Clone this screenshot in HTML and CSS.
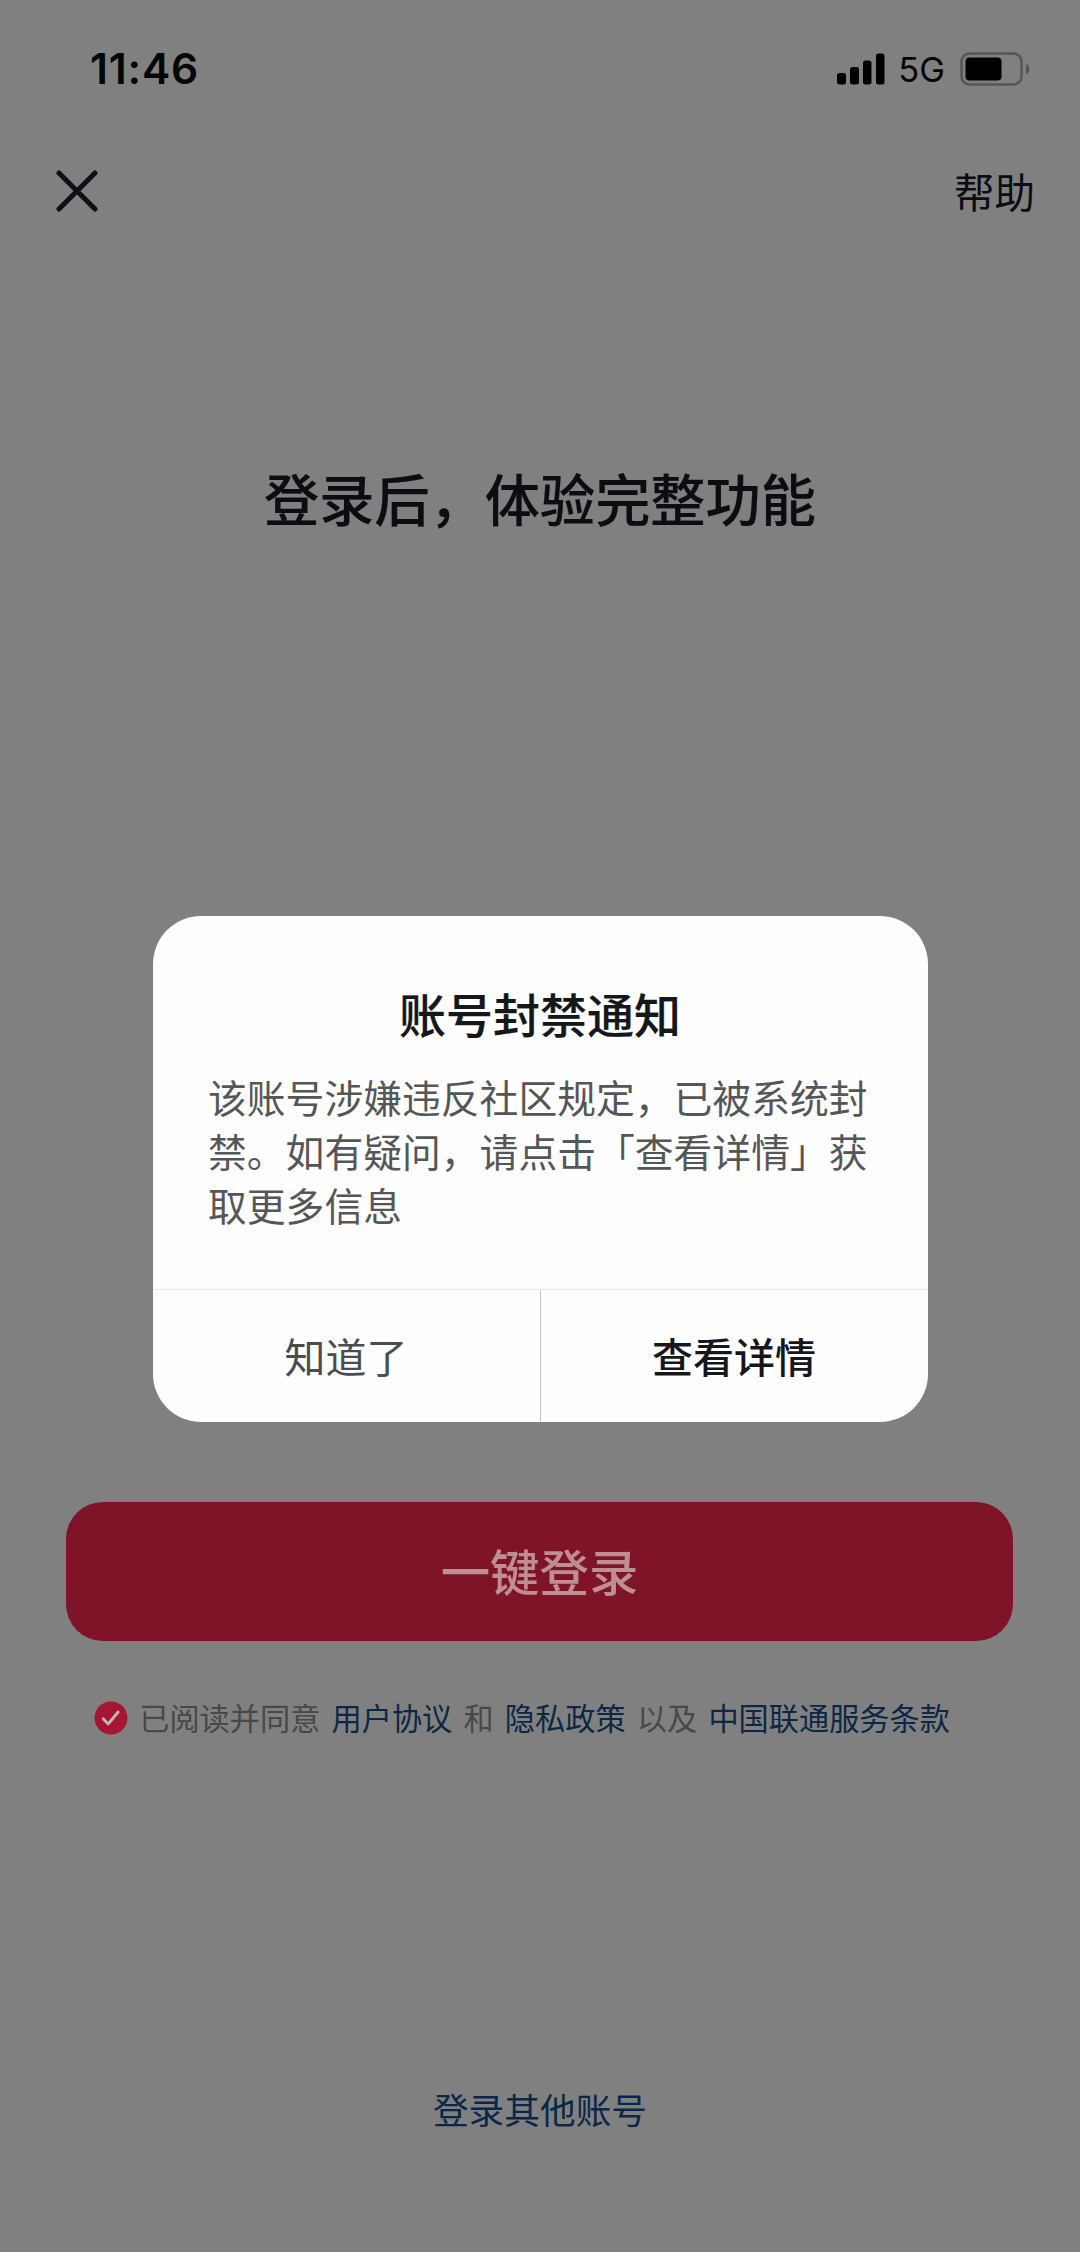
FILE: index.html
```html
<!DOCTYPE html>
<html lang="zh-CN">
<head>
  <meta charset="UTF-8">
  <title>登录</title>
  <link rel="stylesheet" href="styles.css">
</head>
<body>
  <div class="page">
    <div class="status-bar">
      <span class="time">11:46</span>
      <div class="status-icons">
        <svg class="signal" width="48" height="32" viewBox="0 0 48 32">
          <rect x="0" y="20" width="9" height="11.5" rx="2.5"/>
          <rect x="13" y="14" width="9" height="17.5" rx="2.5"/>
          <rect x="26" y="7.5" width="8.5" height="24" rx="2.5"/>
          <rect x="39" y="0.5" width="8.5" height="31" rx="2.5"/>
        </svg>
        <span class="network">5G</span>
        <svg class="battery" width="70" height="34" viewBox="0 0 70 34">
          <rect x="1.5" y="1.5" width="60" height="31" rx="8" fill="none" stroke="#555" stroke-width="2.4"/>
          <rect x="5.5" y="5.5" width="36" height="23" rx="4"/>
          <path d="M66 11.5c4.5 2 4.5 9 0 11z" fill="#555"/>
        </svg>
      </div>
    </div>

    <div class="nav">
      <svg class="close" width="42" height="42" viewBox="0 0 42 42">
        <path d="M3 3L39 39M39 3L3 39"/>
      </svg>
      <span class="help">帮助</span>
    </div>

    <h1>登录后，体验完整功能</h1>

    <button type="button" class="login">一键登录</button>

    <div class="agreement">
      <svg class="check" width="34" height="34" viewBox="0 0 34 34">
        <circle cx="17" cy="17" r="16.5"/>
        <path d="M9.2 17.8L14.2 23L24.2 11"/>
      </svg>
      <span>已阅读并同意</span>
      <a>用户协议</a>
      <span>和</span>
      <a>隐私政策</a>
      <span>以及</span>
      <a>中国联通服务条款</a>
    </div>

    <a class="other">登录其他账号</a>
  </div>

  <div class="overlay">
    <div class="modal">
      <h2>账号封禁通知</h2>
      <p>该账号涉嫌违反社区规定，已被系统封禁。如有疑问，请点击「查看详情」获取更多信息</p>
      <div class="actions">
        <button type="button" class="btn">知道了</button>
        <button type="button" class="btn detail">查看详情</button>
      </div>
    </div>
  </div>
</body>
</html>
```
FILE: styles.css
```css
* {
  box-sizing: border-box;
}

body {
  margin: 0;
  background-color: #808080;
  color: #0c0d12;
  font-family: "Noto Sans CJK SC", "Noto Sans", sans-serif;
}

h1, h2, p {
  margin: 0;
}

button {
  border: none;
  padding: 0;
  background: none;
  font-family: inherit;
}

.page {
  width: 1080px;
  height: 2252px;
  display: flex;
  flex-direction: column;
  overflow: hidden;
}

.status-bar {
  height: 136px;
  padding: 0 50px 0 90px;
  display: flex;
  align-items: center;
  justify-content: space-between;
  color: #050505;
  font-family: Inter, sans-serif;
}

.time {
  margin-top: 2px;
  font-size: 42.5px;
  font-weight: 600;
  line-height: 50px;
  letter-spacing: 0.8px;
}

.status-icons {
  display: flex;
  align-items: center;
}

.signal {
  margin-top: 1px;
}

.network {
  margin: 3px 15px 0 13px;
  font-size: 34.5px;
  line-height: 40px;
}

.battery {
  margin-top: 1px;
}

.nav {
  height: 110px;
  padding: 0 45px 0 56px;
  display: flex;
  align-items: center;
  justify-content: space-between;
}

.close {
  fill: none;
  stroke: #0f1017;
  stroke-width: 5;
  stroke-linecap: round;
}

.help {
  font-size: 40.5px;
  line-height: 60px;
}

h1 {
  margin-top: 211px;
  text-align: center;
  font-size: 55.2px;
  font-weight: 500;
  line-height: 80px;
  -webkit-text-stroke: 0.2px;
}

.login {
  margin: 965px 67px 0 66px;
  height: 139px;
  flex-shrink: 0;
  padding-bottom: 4px;
  border-radius: 37px;
  background-color: #7f1428;
  color: #bd8e94;
  font-size: 49.4px;
  font-weight: 500;
}

.agreement {
  margin-top: 54px;
  height: 44px;
  padding-left: 94px;
  display: flex;
  align-items: center;
  gap: 11.2px;
  font-size: 30.2px;
  line-height: 44px;
  color: #484848;
  white-space: nowrap;
}

.agreement a, .other {
  color: #0c2745;
}

.check {
  fill: #a51632;
  margin-top: 2px;
}

.check path {
  fill: none;
  stroke: #c5b4b7;
  stroke-width: 2.8;
  stroke-linecap: round;
  stroke-linejoin: round;
}

.other {
  margin-top: 345px;
  text-align: center;
  font-size: 35.7px;
  line-height: 50px;
}

.overlay {
  position: absolute;
  top: 0;
  left: 0;
  width: 1080px;
  height: 2252px;
  padding-top: 915.5px;
}

.modal {
  width: 775px;
  height: 506.5px;
  margin: 0 auto;
  display: flex;
  flex-direction: column;
  overflow: hidden;
  border-radius: 48px;
  background-color: #fefefe;
}

h2 {
  margin-top: 67px;
  text-align: center;
  font-size: 47px;
  font-weight: 500;
  line-height: 60px;
  color: #15171a;
  -webkit-text-stroke: 0.2px;
}

p {
  margin: 26px 54px 0 55.5px;
  font-size: 38.8px;
  line-height: 54.1px;
  color: #555658;
}

.actions {
  margin-top: auto;
  height: 133px;
  display: flex;
  border-top: 1px solid #e4e4e4;
}

.btn {
  flex: 1;
  padding-bottom: 3px;
  font-size: 41px;
  color: #4b4c4f;
}

.detail {
  border-left: 1px solid #c4c4c4;
  font-weight: 500;
  color: #15171a;
}
```
